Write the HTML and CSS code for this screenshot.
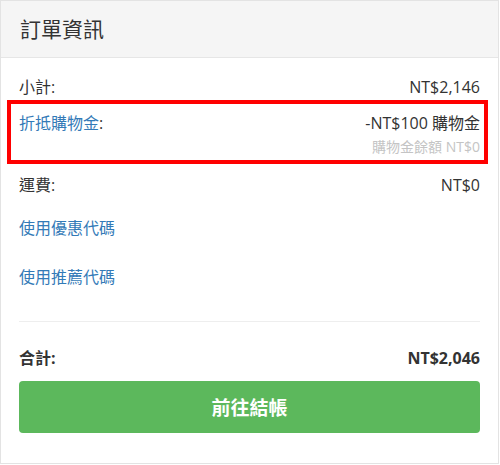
FILE: index.html
```html
<!DOCTYPE html>
<html lang="zh-Hant">
<head>
    <meta charset="UTF-8">
    <title>訂單資訊</title>
    <link rel="stylesheet" href="styles.css">
</head>
<body>
    <div class="panel">
        <div class="panel-heading">訂單資訊</div>
        <div class="panel-body">
            <div class="row first">
                <span>小計:</span>
                <span>NT$2,146</span>
            </div>

            <div class="highlight">
                <div class="row">
                    <span><a href="#">折抵購物金</a>:</span>
                    <span>-NT$100 購物金</span>
                </div>
                <div class="note">購物金餘額 NT$0</div>
            </div>

            <div class="row shipping">
                <span>運費:</span>
                <span>NT$0</span>
            </div>

            <a class="code-link coupon" href="#">使用優惠代碼</a>
            <a class="code-link referral" href="#">使用推薦代碼</a>

            <hr class="divider">

            <div class="row total">
                <span>合計:</span>
                <span>NT$2,046</span>
            </div>

            <button class="btn-checkout">前往結帳</button>
        </div>
    </div>
</body>
</html>
```

FILE: styles.css
```css
body {
    margin: 0;
    font-family: "Open Sans", "Noto Sans CJK TC", sans-serif;
    font-size: 16px;
    color: #333;
    background: #fff;
}
.panel {
    width: 499px;
    height: 464px;
    box-sizing: border-box;
    border: 1px solid #e3e3e3;
    background: #fff;
}
.panel-heading {
    height: 56px;
    line-height: 56px;
    padding: 0 19px;
    font-size: 21px;
    background: #f5f5f5;
    border-bottom: 1px solid #e6e6e6;
}
.panel-body {
    padding: 0 18px;
    display: flex;
    flex-direction: column;
}
a {
    color: #337ab7;
    text-decoration: none;
}
.row {
    display: flex;
    justify-content: space-between;
    line-height: 24px;
}
.row.first {
    margin-top: 17px;
}
.highlight {
    margin: 1px -8px 0 -12px;
    padding: 7px 4px 4px 8px;
    border: 4px solid #f00;
}
.note {
    margin-top: 3px;
    text-align: right;
    font-size: 14px;
    line-height: 18px;
    color: #c4c4c4;
}
.row.shipping {
    margin-top: 9px;
}
.code-link {
    line-height: 24px;
    align-self: flex-start;
}
.coupon {
    margin-top: 19px;
}
.referral {
    margin-top: 25px;
}
.divider {
    margin: 32px 0 0;
    border: 0;
    border-top: 1px solid #eee;
}
.row.total {
    margin-top: 24px;
    font-weight: bold;
}
.btn-checkout {
    margin-top: 11px;
    height: 52px;
    border: 0;
    border-radius: 4px;
    background: #5cb85c;
    color: #fff;
    font-family: inherit;
    font-size: 19px;
    font-weight: 600;
}
```
